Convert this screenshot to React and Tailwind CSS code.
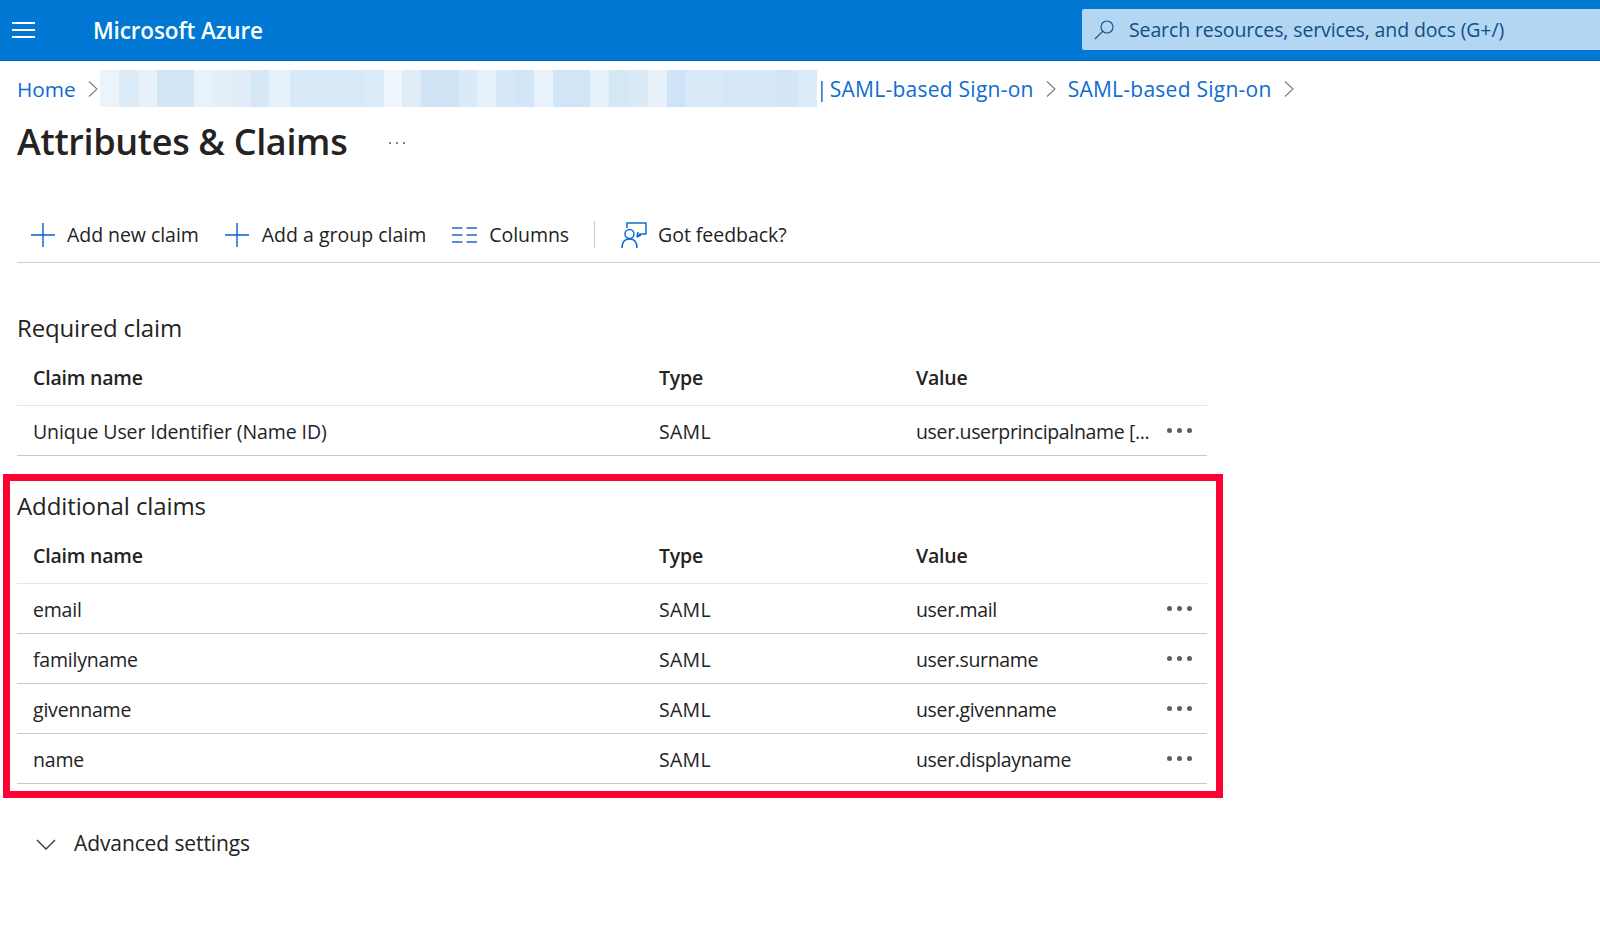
import React from "react";

const stripes = [
  "w-[19px] bg-[#ebf3fb]", "w-[19px] bg-[#dcebf8]", "w-[19px] bg-[#e6f1fa]", "w-[37px] bg-[#d3e6f6]",
  "w-[19px] bg-[#e8f2fb]", "w-[19px] bg-[#e4eff9]", "w-[18px] bg-[#e1eef9]", "w-[19px] bg-[#d6e7f6]",
  "w-[21px] bg-[#e6f1fb]", "w-[75px] bg-[#d8e9f7]", "w-[19px] bg-[#dcebf8]", "w-[18px] bg-[#eef5fc]",
  "w-[19px] bg-[#e0edf8]", "w-[38px] bg-[#cfe3f5]", "w-[18px] bg-[#dbeaf8]", "w-[19px] bg-[#e5f0fa]",
  "w-[19px] bg-[#d6e8f7]", "w-[19px] bg-[#d2e6f7]", "w-[19px] bg-[#e8f2fb]", "w-[37px] bg-[#d1e5f6]",
  "w-[19px] bg-[#e6f0fa]", "w-[20px] bg-[#d4e8f4]", "w-[19px] bg-[#daeaf7]", "w-[19px] bg-[#e6f1fa]",
  "w-[19px] bg-[#cfe3f7]", "w-[37px] bg-[#d9e9f8]", "w-[54px] bg-[#d6e7f7]", "w-[21px] bg-[#d4e6f6]",
  "w-[19px] bg-[#dcebf8]",
];

function Chevron() {
  return (
    <svg width="10" height="18" viewBox="0 0 10 18" className="shrink-0" fill="none" stroke="#7a7a7a" strokeWidth="1.1">
      <path d="M1 1.5 9 9l-8 7.5" />
    </svg>
  );
}

function Plus() {
  return (
    <svg width="24" height="24" viewBox="0 0 24 24" fill="none" stroke="#0f5fc6" strokeWidth="1.4" className="shrink-0">
      <path d="M12 0v24M0 12h24" />
    </svg>
  );
}

function Dots() {
  return (
    <div className="flex gap-[5px] -mt-1">
      <span className="w-[5px] h-[5px] rounded-full bg-[#605e5c]" />
      <span className="w-[5px] h-[5px] rounded-full bg-[#605e5c]" />
      <span className="w-[5px] h-[5px] rounded-full bg-[#605e5c]" />
    </div>
  );
}

function HeadRow() {
  return (
    <div className="grid grid-cols-[626px_257px_1fr] items-center pl-4 pr-[15px] h-[55px] pb-[1px] font-semibold border-b border-[#e6e6e6]">
      <div>Claim name</div>
      <div>Type</div>
      <div>Value</div>
    </div>
  );
}

function Row({ name, value }) {
  return (
    <div className="grid grid-cols-[626px_257px_1fr] items-center pl-4 pr-[15px] h-[50px] pt-[3px] border-b border-[#c8c8c8]">
      <div>{name}</div>
      <div className="tracking-[0.3px]">SAML</div>
      <div className="flex items-center justify-between">
        <span className="tracking-[-0.35px]">{value}</span>
        <Dots />
      </div>
    </div>
  );
}

export default function App() {
  return (
    <div className="min-h-[949px] bg-white text-[#242322] font-['Open_Sans','Noto_Sans',sans-serif] text-[19.5px] tracking-[-0.2px] overflow-hidden">
      <header className="h-[61px] bg-[#0078d4] border-b border-[#0068c4] flex items-center">
        <div className="ml-3 w-[23px] flex flex-col gap-[5px]">
          <span className="h-[2px] bg-white" />
          <span className="h-[2px] bg-white" />
          <span className="h-[2px] bg-white" />
        </div>
        <div className="ml-[58px] mt-[2px] text-white font-semibold text-[22.5px] tracking-[-0.13px]">Microsoft Azure</div>
        <div className="ml-auto w-[518px] h-[41px] mb-[1px] bg-[#b3d6f2] rounded-l-[2px] flex items-center pl-3 text-[#0f4f86]">
          <svg width="20" height="20" viewBox="0 0 20 20" fill="none" stroke="#14558c" strokeWidth="1.2" className="shrink-0">
            <circle cx="13" cy="7" r="6" />
            <path d="M8.6 11.4 1 19" />
          </svg>
          <span className="ml-[15px] tracking-[-0.12px]">Search resources, services, and docs (G+/)</span>
        </div>
      </header>

      <main className="pl-[17px]">
        <nav className="mt-[9px] h-[37px] flex items-center text-[#0f6cd0] text-[21px] tracking-[0.25px]">
          <span className="w-[58px] pt-[2px] text-[20.8px] tracking-normal">Home</span>
          <span className="ml-[13px]"><Chevron /></span>
          <div className="ml-[2px] flex h-[37px] shrink-0">
            {stripes.map((s, i) => (
              <span key={i} className={s} />
            ))}
          </div>
          <span className="-ml-[1px] pt-[2px]">|</span>
          <span className="ml-[2px] pt-[2px] whitespace-nowrap">SAML-based Sign-on</span>
          <span className="ml-3"><Chevron /></span>
          <span className="ml-[12px] pt-[2px] whitespace-nowrap">SAML-based Sign-on</span>
          <span className="ml-3"><Chevron /></span>
        </nav>

        <div className="mt-[11px] h-[48px] flex items-center">
          <h1 className="font-semibold text-[36px] tracking-[-0.33px] text-[#242322]">Attributes &amp; Claims</h1>
          <div className="ml-[42px] mt-[2px] flex gap-[5px]">
            <span className="w-[2px] h-[2px] rounded-full bg-[#555]" />
            <span className="w-[2px] h-[2px] rounded-full bg-[#555]" />
            <span className="w-[2px] h-[2px] rounded-full bg-[#555]" />
          </div>
        </div>

        <div className="mt-[42px] h-[55px] border-b border-[#cfcfcf] flex items-center pl-[14px] pb-[1px] tracking-[-0.05px]">
          <Plus />
          <span className="ml-[12px] whitespace-nowrap">Add new claim</span>
          <span className="ml-[26px]"><Plus /></span>
          <span className="ml-[13px] whitespace-nowrap tracking-[0px]">Add a group claim</span>
          <svg width="25" height="16" viewBox="0 0 25 16" fill="none" stroke="#1f68c9" strokeWidth="1.4" className="ml-[26px] shrink-0">
            <path d="M0 1h10.5M14.5 1h10.5M0 8h10.5M14.5 8h10.5M0 15h10.5M14.5 15h10.5" />
          </svg>
          <span className="ml-[12px] whitespace-nowrap">Columns</span>
          <span className="ml-[25px] w-[1px] h-[27px] bg-[#c8c8c8]" />
          <svg width="27" height="26" viewBox="0 0 27 26" fill="none" stroke="#0f6cd0" strokeWidth="1.5" className="ml-[25px] shrink-0">
            <path d="M7 6V1h19v11h-6l-3 3" />
            <path d="M17 15l1-5M17 15l4-2" />
            <circle cx="9.5" cy="12" r="4.5" />
            <path d="M2 26c0-6 3-9 7.5-9s7.5 3 7.5 9" />
          </svg>
          <span className="ml-[11px] whitespace-nowrap">Got feedback?</span>
        </div>

        <h2 className="mt-[50px] h-[30px] leading-[30px] text-[24px] tracking-[-0.15px]">Required claim</h2>
        <div className="w-[1190px] mt-[8px]">
          <HeadRow />
          <Row name={<span className="tracking-[-0.1px]">Unique User Identifier (Name ID)</span>} value="user.userprincipalname [..." />
        </div>

        <section className="mt-[18px] -ml-[14px] w-[1220px] border-[7px] border-[#ff0033] pl-[7px] pr-[9px] pt-[10px] pb-[7px]">
          <h2 className="h-[30px] leading-[30px] text-[24px] tracking-[-0.1px]">Additional claims</h2>
          <div className="mt-[8px]">
            <HeadRow />
            <Row name="email" value="user.mail" />
            <Row name="familyname" value="user.surname" />
            <Row name="givenname" value="user.givenname" />
            <Row name="name" value="user.displayname" />
          </div>
        </section>

        <div className="mt-[31px] h-[30px] flex items-center pl-[19px]">
          <svg width="20" height="11" viewBox="0 0 20 11" fill="none" stroke="#333" strokeWidth="1.3" className="shrink-0">
            <path d="M1 1l9 9 9-9" />
          </svg>
          <span className="ml-[18px] text-[21px] tracking-[-0.1px]">Advanced settings</span>
        </div>
      </main>
    </div>
  );
}
